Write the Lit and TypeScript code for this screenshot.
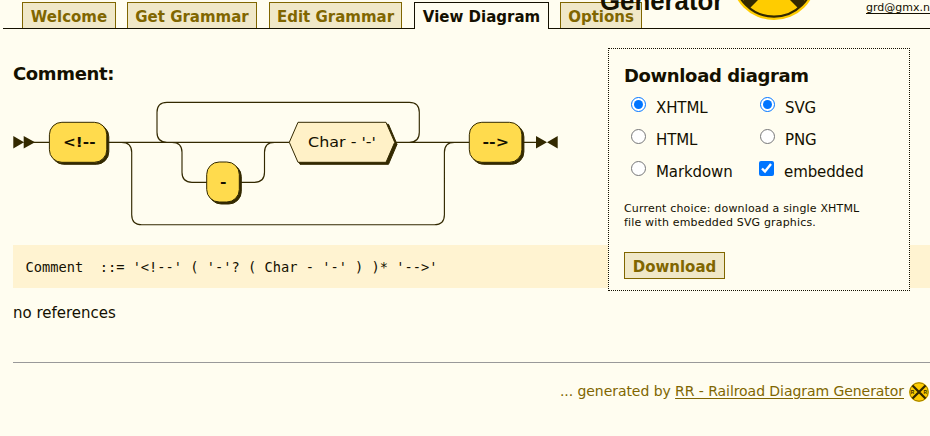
import { LitElement, html, svg, css } from "lit";
import { customElement, state } from "lit/decorators.js";

const TABS = [
  { id: "welcome", label: "Welcome" },
  { id: "get", label: "Get Grammar" },
  { id: "edit", label: "Edit Grammar" },
  { id: "view", label: "View Diagram" },
  { id: "options", label: "Options" },
];

@customElement("rr-logo")
class RrLogo extends LitElement {
  static styles = css`
    :host { display: block; }
    svg { display: block; width: 100%; height: 100%; }
    text { font: bold 24px "Liberation Sans", sans-serif; fill: #332900; }
  `;
  render() {
    return svg`<svg viewBox="0 0 100 100">
      <circle cx="50" cy="50" r="50" fill="#ffcc00"/>
      <circle cx="50" cy="50" r="46" fill="none" stroke="#332900" stroke-width="2.6"/>
      <path d="M17.5 17.5 82.5 82.5M82.5 17.5 17.5 82.5" stroke="#332900" stroke-width="11.5"/>
      <text x="9" y="59">R</text><text x="73" y="59">R</text>
    </svg>`;
  }
}

@customElement("rr-diagram")
class RrDiagram extends LitElement {
  static styles = css`
    :host { display: block; }
    svg { display: block; }
    .line { fill: none; stroke: #332900; stroke-width: 1.15; }
    .shadow, .arrow { fill: #332900; stroke: #332900; stroke-width: 1; }
    .arrow { stroke: none; }
    .terminal { fill: #ffdb4d; stroke: #332900; stroke-width: 1; }
    .nonterminal { fill: #fff1c7; stroke: #332900; stroke-width: 1; }
    text { font: 14.5px "DejaVu Sans", sans-serif; fill: #141000; }
    .bold { font-size: 14px; font-weight: bold; }
  `;
  terminal(x: number, y: number, w: number, label: string, tx: number, tw: number) {
    return svg`
      <rect class="shadow" x=${x + 2} y=${y + 2} width=${w} height="40" rx="12.5"/>
      <rect class="terminal" x=${x} y=${y} width=${w} height="40" rx="12.5"/>
      <text class="bold" x=${tx} y=${y + 25} textLength=${tw} lengthAdjust="spacingAndGlyphs">${label}</text>`;
  }
  render() {
    return html`<svg width="560" height="140" viewBox="0 95 560 140">
      <path class="line" d="M30 142.3H49M108 142.3H290M395 142.3H469M523 142.3H538
        M167 142.3Q157 142.3 157 132.3V112.3Q157 102.3 167 102.3H409.3Q419.3 102.3 419.3 112.3V132.3Q419.3 142.3 409.3 142.3
        M172 142.3Q182 142.3 182 152.3V172.3Q182 182.3 192 182.3H207M241 182.3H254.5Q264.5 182.3 264.5 172.3V152.3Q264.5 142.3 274.5 142.3
        M121.5 142.3Q131.7 142.3 131.7 152.3V214.7Q131.7 224.7 141.7 224.7H434.4Q444.4 224.7 444.4 214.7V152.3Q444.4 142.3 454.4 142.3"/>
      <path class="arrow" d="M13.3 136V148.5L24 142.3ZM23.7 136V148.5L35 142.3ZM536 136V148.5L547 142.3ZM557.7 136V148.5L547 142.3Z"/>
      ${this.terminal(49.4, 122.3, 57.4, "<!--", 63, 32.5)}
      ${this.terminal(206.7, 162, 32.6, "-", 220, 6.5)}
      ${this.terminal(469.3, 122.3, 52.6, "-->", 482.5, 26.5)}
      <path class="shadow" d="M291.3 144.3 300 124.3H388.5L397 144.3 388.5 164.3H300Z"/>
      <path class="nonterminal" d="M289.3 142.3 298 122.3H386L394.7 142.3 386 162.3H298Z"/>
      <text x="308" y="147.3" textLength="68" lengthAdjust="spacingAndGlyphs">Char - '-'</text>
    </svg>`;
  }
}

@customElement("download-panel")
class DownloadPanel extends LitElement {
  static styles = css`
    :host {
      display: block; box-sizing: border-box; width: 302px; height: 243px;
      padding: 17px 15px; background: #fffdf0; border: 1px dotted #141000;
    }
    h2 { margin: 0 0 6px; font-size: 18px; line-height: 20px; letter-spacing: -0.36px; }
    .choices { display: grid; grid-template-columns: 129px 1fr; grid-auto-rows: 32px; padding-left: 7px; letter-spacing: -0.1px; }
    label { display: flex; align-items: center; gap: 10px; }
    input { width: 15px; height: 15px; margin: -7px 0 0; }
    .check input { margin-left: -1px; }
    p { margin: 14px 0 0; font-size: 11px; line-height: 14px; letter-spacing: 0.17px; }
    button {
      display: block; width: 101px; height: 27px; margin: 22px 0 0; padding: 2px 0 0;
      border: 1px solid #806600; background: #f0e8c8; color: #806600;
      font: bold 15px "DejaVu Sans", sans-serif; 
    }
  `;
  render() {
    return html`
      <h2>Download diagram</h2>
      <div class="choices">
        <label><input type="radio" name="text" checked />XHTML</label>
        <label><input type="radio" name="image" checked />SVG</label>
        <label><input type="radio" name="text" />HTML</label>
        <label><input type="radio" name="image" />PNG</label>
        <label><input type="radio" name="text" />Markdown</label>
        <label class="check"><input type="checkbox" checked />embedded</label>
      </div>
      <p>Current choice: download a single XHTML<br />file with embedded SVG graphics.</p>
      <button>Download</button>`;
  }
}

@customElement("app-root")
class AppRoot extends LitElement {
  @state() active = "view";
  static styles = css`
    :host {
      display: block; position: relative; height: 436px; overflow: hidden;
      background: #fffdf0; color: #141000; font: 15px "DejaVu Sans", sans-serif;
    }
    nav {
      display: flex; align-items: flex-end; box-sizing: border-box; height: 29px;
      margin-left: 3px; padding-left: 19px; border-bottom: 1px solid #141000;
    }
    .tab {
      box-sizing: border-box; height: 26px; margin-right: 11px; border: 1px solid #806600;
      border-bottom: 0; background: #f0e8c8; color: #806600;
      font-weight: bold; line-height: 29px; text-align: center; white-space: nowrap;
    }
    .welcome { width: 94px; }
    .get { width: 130px; margin-right: 12px; }
    .edit { width: 133px; margin-right: 12px; }
    .view { width: 135px; }
    .options { width: 82px; }
    .active { height: 27px; margin-bottom: -1px; background: #fffdf0; color: #141000; border-color: #141000; }
    .masthead { position: absolute; left: 600px; top: -14px; font: bold 25.8px/30px "Liberation Sans", sans-serif; }
    .logo { position: absolute; left: 731px; top: -66px; width: 86px; height: 86px; }
    .mail { position: absolute; left: 866px; top: 0; font-size: 11px; line-height: 15px; text-decoration: underline; text-underline-offset: 2px; white-space: nowrap; }
    main { padding-left: 13px; }
    h1 { margin: 34px 0 0; font-size: 18px; line-height: 22px; letter-spacing: -0.36px; }
    rr-diagram { margin: 10px 0 0 -13px; }
    .code {
      height: 43px; margin: 10px 0 0; padding-left: 12.5px; background: #fff3d1;
      font: 13.7px/45px "DejaVu Sans Mono", monospace;
    }
    .refs { margin: 15px 0 0; line-height: 20px; }
    hr { height: 1px; margin: 39px 0 0; border: 0; background: #999; }
    footer { display: flex; justify-content: flex-end; align-items: center; margin-top: 18px; height: 22px; padding-right: 1px; color: #806600; font-size: 14px; letter-spacing: -0.06px; white-space: pre; }
    footer a { color: inherit; text-underline-offset: 2px; }
    footer span, footer a { margin-top: -2px; }
    footer rr-logo { width: 20px; height: 20px; margin-left: 5px; }
    download-panel { position: absolute; left: 608px; top: 48px; }
  `;
  render() {
    return html`
      <nav>
        ${TABS.map(
          (t) => html`<div class="tab ${t.id} ${t.id === this.active ? "active" : ""}" @click=${() => (this.active = t.id)}>${t.label}</div>`
        )}
      </nav>
      <div class="masthead">Generator</div>
      <rr-logo class="logo"></rr-logo>
      <a class="mail">grd@gmx.net</a>
      <main>
        <h1>Comment:</h1>
        <rr-diagram></rr-diagram>
        <pre class="code">Comment  ::= '&lt;!--' ( '-'? ( Char - '-' ) )* '--&gt;'</pre>
        <p class="refs">no references</p>
        <hr />
        <footer><span>... generated by </span><a href="#">RR - Railroad Diagram Generator</a><rr-logo></rr-logo></footer>
      </main>
      <download-panel></download-panel>`;
  }
}
